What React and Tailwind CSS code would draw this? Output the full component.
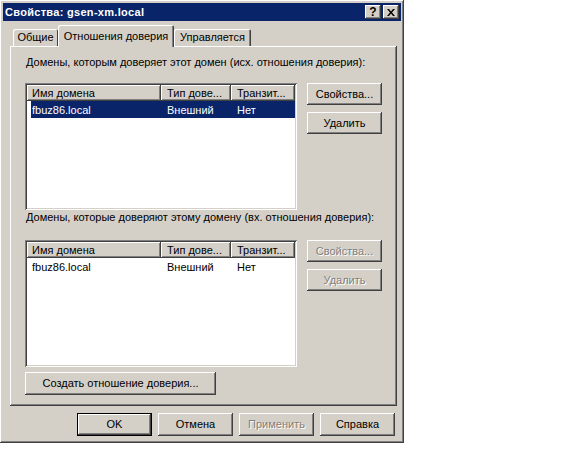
import React from "react";

const raised =
  "shadow-[inset_-1px_-1px_#404040,inset_1px_1px_#ffffff,inset_-2px_-2px_#808080,inset_2px_2px_#d4d0c8]";
const sunken =
  "shadow-[inset_1px_1px_#808080,inset_-1px_-1px_#ffffff,inset_2px_2px_#404040,inset_-2px_-2px_#d4d0c8]";
const headerBevel =
  "shadow-[inset_-1px_-1px_#404040,inset_1px_1px_#ffffff,inset_-2px_-2px_#808080]";
const disabledText = "text-[#808080] [text-shadow:1px_1px_0_#ffffff]";

const Button = ({ children, disabled, isDefault, className = "" }) => (
  <div
    className={`flex items-center justify-center bg-[#d4d0c8] text-[11px] ${
      isDefault ? "border border-black" : ""
    } ${className}`}
  >
    <div
      className={`w-full h-full flex items-center justify-center ${raised} ${
        disabled ? disabledText : "text-black"
      }`}
    >
      {children}
    </div>
  </div>
);

const DomainList = ({ selected }) => (
  <div className={`w-[272px] h-[127px] bg-white p-[2px] ${sunken}`}>
    <div className="flex h-[16px] bg-[#d4d0c8] text-[11px] text-black">
      <div className={`w-[134px] pl-[5px] pt-[1px] flex items-center ${headerBevel}`}>Имя домена</div>
      <div className={`w-[70px] pl-[6px] pt-[1px] flex items-center ${headerBevel}`}>Тип дове...</div>
      <div className={`w-[64px] pl-[6px] pt-[1px] flex items-center ${headerBevel}`}>Транзит...</div>
    </div>
    <div
      className={`ml-[4px] h-[17px] pt-[1px] flex items-center text-[11px] ${
        selected ? "bg-[#0a246a] text-white" : "text-black"
      }`}
    >
      <div className="w-[130px] pl-[1px]">fbuz86.local</div>
      <div className="w-[70px] pl-[6px]">Внешний</div>
      <div className="pl-[6px]">Нет</div>
    </div>
  </div>
);

const CaptionButton = ({ children }) => (
  <div
    className={`w-[16px] h-[14px] bg-[#d4d0c8] flex items-center justify-center ${raised}`}
  >
    {children}
  </div>
);

export default function App() {
  return (
    <div className="w-[583px] h-[450px] bg-white font-['Liberation_Sans',Arial,sans-serif]">
      <div className={`w-[404px] h-[443px] bg-[#d4d0c8] p-[3px] flex flex-col ${raised}`}>
        {/* title bar */}
        <div className="h-[18px] bg-[#0a246a] flex items-center pl-[2px] pr-[2px] gap-[2px]">
          <span className="flex-1 text-white font-bold text-[11px] tracking-[0.3px]">Свойства: gsen-xm.local</span>
          <CaptionButton>
            <span className="text-[12px] font-bold leading-none text-black">?</span>
          </CaptionButton>
          <CaptionButton>
            <svg width="8" height="7" viewBox="0 0 8 7">
              <path d="M0 0h2l2 2.5L6 0h2L5 3.5 8 7H6L4 4.5 2 7H0l3-3.5z" fill="#000" />
            </svg>
          </CaptionButton>
        </div>

        {/* tabs */}
        <div className="mt-[4px] h-[21px] flex items-end pl-[10px] text-[11px] text-black">
          <div className="w-[45px] h-[17px] flex items-center justify-center rounded-t-[2px] shadow-[inset_1px_1px_#ffffff,inset_-1px_0_#404040]">
            Общие
          </div>
          <div className="relative z-10 -mb-[1px] w-[116px] h-[22px] bg-[#d4d0c8] flex items-start pt-[3px] justify-center rounded-t-[2px] shadow-[inset_1px_1px_#ffffff,inset_-1px_0_#404040,inset_-2px_0_#808080]">
            Отношения доверия
          </div>
          <div className="w-[77px] h-[17px] flex items-center justify-center rounded-t-[2px] shadow-[inset_1px_1px_#ffffff,inset_-1px_0_#404040,inset_-2px_0_#808080]">
            Управляется
          </div>
        </div>

        {/* panel */}
        <div className={`ml-[7px] w-[387px] h-[360px] flex flex-col pl-[15px] pt-[10px] text-[11px] text-black ${raised}`}>
          <div className="pl-[1px] leading-[13px]">
            Домены, которым доверяет этот домен (исх. отношения доверия):
          </div>
          <div className="mt-[14px] flex">
            <DomainList selected />
            <div className="ml-[10px] flex flex-col gap-[7px]">
              <Button className="w-[75px] h-[22px]">Свойства...</Button>
              <Button className="w-[75px] h-[22px]">Удалить</Button>
            </div>
          </div>
          <div className="mt-[1px] pl-[1px] leading-[13px]">
            Домены, которые доверяют этому домену (вх. отношения доверия):
          </div>
          <div className="mt-[16px] flex">
            <DomainList />
            <div className="ml-[10px] flex flex-col gap-[7px]">
              <Button disabled className="w-[75px] h-[22px]">Свойства...</Button>
              <Button disabled className="w-[75px] h-[22px]">Удалить</Button>
            </div>
          </div>
          <Button className="mt-[5px] w-[191px] h-[23px]">Создать отношение доверия...</Button>
        </div>

        {/* dialog buttons */}
        <div className="mt-[7px] flex justify-end gap-[6px] pr-[6px]">
          <Button isDefault className="w-[75px] h-[23px]">OK</Button>
          <Button className="w-[75px] h-[23px]">Отмена</Button>
          <Button disabled className="w-[75px] h-[23px]">Применить</Button>
          <Button className="w-[75px] h-[23px]">Справка</Button>
        </div>
      </div>
    </div>
  );
}
